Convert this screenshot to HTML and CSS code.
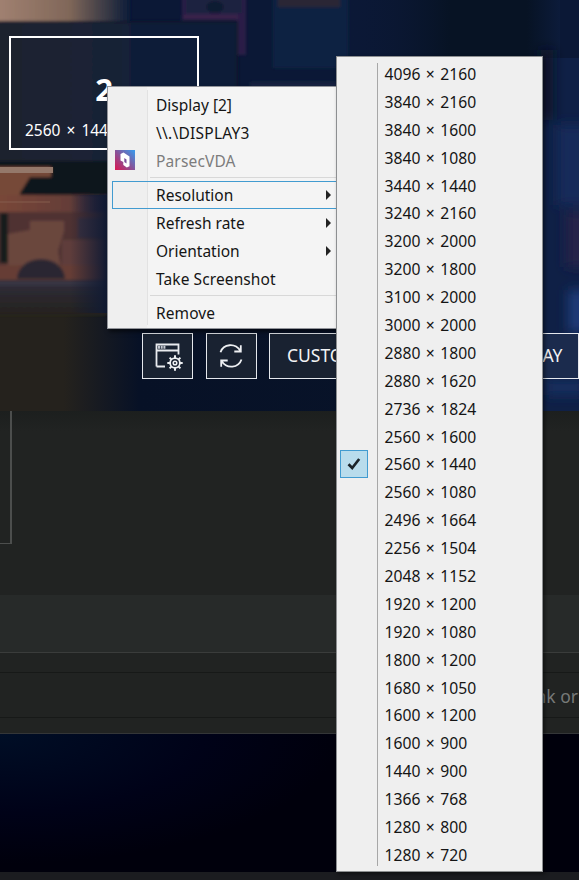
FILE: index.html
```
<!DOCTYPE html>
<html lang="en">
<head>
<meta charset="utf-8">
<title>Display manager</title>
<link rel="stylesheet" href="styles.css">
</head>
<body>
<main class="desktop">
  <section class="app">
    <svg class="wallpaper" viewBox="0 0 579 411" preserveAspectRatio="none" aria-hidden="true">
      <defs>
        <linearGradient id="base" x1="0" x2="1">
          <stop offset="0" stop-color="#25221d"/><stop offset=".11" stop-color="#25221d"/>
          <stop offset=".24" stop-color="#071126"/><stop offset=".65" stop-color="#081329"/><stop offset="1" stop-color="#102552"/>
        </linearGradient>
        <linearGradient id="sand" x1="0" x2="1"><stop offset="0" stop-color="#a28272"/><stop offset=".55" stop-color="#806759"/><stop offset="1" stop-color="#0c1c38"/></linearGradient>
        <linearGradient id="panel" x1="0" x2="1"><stop offset="0" stop-color="#1f222d"/><stop offset=".35" stop-color="#1c2434"/><stop offset=".65" stop-color="#0d1d38"/><stop offset="1" stop-color="#0b1b38"/></linearGradient>
        <linearGradient id="rust" x1="0" x2="1"><stop offset="0" stop-color="#7a4739"/><stop offset=".65" stop-color="#643d38"/><stop offset="1" stop-color="#1c2040"/></linearGradient>
        <linearGradient id="shade" x1="0" x2="1"><stop offset="0" stop-color="#0c1938" stop-opacity="0"/><stop offset=".5" stop-color="#071324"/><stop offset=".85" stop-color="#071324"/><stop offset="1" stop-color="#0c1b3a"/></linearGradient>
        <linearGradient id="haze" x1="0" y1="0" x2="0" y2="1"><stop offset="0" stop-color="#2f2d3a"/><stop offset="1" stop-color="#25221d"/></linearGradient>
        <linearGradient id="edge" x1="0" x2="1"><stop offset="0" stop-color="#101a33" stop-opacity="0"/><stop offset="1" stop-color="#101a33"/></linearGradient>
        <filter id="soft" x="-10%" y="-10%" width="120%" height="120%"><feGaussianBlur stdDeviation="1.5"/></filter>
        <filter id="softer" x="-30%" y="-30%" width="160%" height="160%"><feGaussianBlur stdDeviation="6"/></filter>
      </defs>
      <rect width="579" height="411" fill="url(#base)"/>
      <rect x="120" width="459" height="90" fill="#0b1836"/>
      <rect x="340" width="220" height="70" fill="url(#shade)"/>
      <g filter="url(#soft)">
        <rect x="-5" y="-5" width="135" height="26" fill="url(#sand)"/>
        <path d="M182-5h64v60h-10V20h-54z" fill="#2b1e46"/>
        <rect x="186" y="-5" width="56" height="18" fill="#1b2440"/>
        <ellipse cx="215" cy="7" rx="9" ry="6" fill="#101c30"/>
        <rect x="183" y="15" width="55" height="4" fill="#3a2048"/>
        <rect x="273" y="-5" width="75" height="73" fill="#0e2043"/>
        <rect x="278" y="-3" width="62" height="10" fill="#2a2536"/>
        <rect x="250" y="82" width="90" height="8" fill="#12203f"/>
        <rect x="-5" y="22" width="242" height="139" fill="url(#panel)"/>
        <path d="M-5 22h242v80" fill="none" stroke="#09122a" stroke-width="2"/>
        <rect x="-5" y="161" width="115" height="37" fill="#10171a"/>
        <path d="M-5 167h56v10H30l-10 16v3H-5z" fill="#764838"/>
        <rect x="-5" y="195" width="116" height="19" fill="url(#rust)"/>
        <rect x="-5" y="212" width="112" height="68" fill="#4f3332"/>
        <rect x="0" y="213" width="8" height="50" fill="#171c1e"/>
        <path d="M8 234l22-4v-9h34v10l-6 20 3 16H8z" fill="#6b463d"/>
        <path d="M62 240h44v31H62z" fill="#5e3d3b"/>
        <rect x="78" y="218" width="29" height="20" fill="#3c3341"/>
        <rect x="-5" y="265" width="112" height="15" fill="#663e36"/>
        <path d="M17 279a24 20 0 0 1 48 0z" fill="#2b2833"/>
        <rect x="-5" y="281" width="112" height="34" fill="url(#haze)"/>
        <path d="M-5 283H108" stroke="#383544" stroke-width="5"/>
      </g>
      <rect x="70" y="195" width="38" height="118" fill="url(#edge)"/>
      <rect y="167" width="53" height="6" fill="#94786a"/>
      <path d="M0 202h50" stroke="#855d4c"/>
      <rect x="543" y="58" width="36" height="353" fill="#0f2046"/>
      <g filter="url(#softer)">
        <rect x="541" y="50" width="12" height="70" fill="#081428"/>
        <rect x="557" y="125" width="30" height="80" fill="#152b5a"/>
        <rect x="566" y="212" width="20" height="55" fill="#262349"/>
        <rect x="568" y="290" width="20" height="42" fill="#1c3b78"/>
        <rect x="545" y="380" width="40" height="15" fill="#162e5e"/>
      </g>
    </svg>
    <div class="monitor"><strong>2</strong><span>2560 × 1440</span></div>
    <div class="toolbar">
      <button class="tool" aria-label="Settings"><svg width="32" height="32" viewBox="0 0 32 32"><path d="M4.5 26.5V4.5h22v10M4.5 10.5h22M4.5 26.5h8.5" fill="none" stroke="#e9ebef" stroke-width="1.8"/><path d="M6 7.3h8" stroke="#c3c8d0" stroke-width="3" stroke-dasharray="2 .7"/><circle cx="23" cy="23" r="4.9" fill="none" stroke="#eef0f3" stroke-width="1.8"/><circle cx="23" cy="23" r="1.8" fill="none" stroke="#eef0f3" stroke-width="1.5"/><path d="M23 15.3v3M23 27.7v3M15.3 23h3M27.7 23h3M17.6 17.6l2 2M26.4 26.4l2 2M17.6 28.4l2-2M26.4 19.6l2-2" stroke="#eef0f3" stroke-width="2"/></svg></button>
      <button class="tool" aria-label="Refresh"><svg width="32" height="32" viewBox="0 0 32 32" fill="none" stroke="#eef0f3" stroke-width="1.8"><path d="M5.5 12.2C8.5 3.8 20 2.5 25.5 11M25.8 5.2v6.3h-6.5M26.5 19.5C23.5 28 12 29.500 6.500 21M6.200 26.800v-6.300h6.500"/></svg></button>
      <button class="tool tool-custom">CUSTOM</button>
      <button class="tool tool-display">DISPLAY</button>
    </div>
  </section>
  <section class="page">
    <div class="frame"></div>
  </section>
  <section class="band"></section>
  <section class="composer"><div class="field">link or</div></section>
  <section class="night"></section>
  <footer class="taskbar"></footer>

  <nav class="menu">
    <div class="item">Display [2]</div>
    <div class="item path">\\.\DISPLAY3</div>
    <div class="item muted"><svg class="logo" width="20" height="20" viewBox="0 0 20 20"><defs><linearGradient id="vda" x1="0" y1="1" x2="1" y2="0"><stop offset="0" stop-color="#dc164f"/><stop offset=".5" stop-color="#85549b"/><stop offset="1" stop-color="#359df0"/></linearGradient></defs><rect width="20" height="20" fill="url(#vda)"/><path d="M5.500 4l3-1.400 6 4v9.600l-2.700 1.400-3.500-2.500v-3L5.500 10.500z" fill="#fff"/><path d="M9.300 8l2.200 1.400v4L9.300 12z" fill="#7c4f99"/></svg><span>ParsecVDA</span></div>
    <hr>
    <div class="item active">Resolution<i class="arrow"></i></div>
    <div class="item rate">Refresh rate<i class="arrow"></i></div>
    <div class="item">Orientation<i class="arrow"></i></div>
    <div class="item shot">Take Screenshot</div>
    <hr>
    <div class="item remove">Remove</div>
  </nav>

  <ul class="submenu">
    <li>4096 × 2160</li><li>3840 × 2160</li><li>3840 × 1600</li><li>3840 × 1080</li>
    <li>3440 × 1440</li><li>3240 × 2160</li><li>3200 × 2000</li><li>3200 × 1800</li>
    <li>3100 × 2000</li><li>3000 × 2000</li><li>2880 × 1800</li><li>2880 × 1620</li>
    <li>2736 × 1824</li><li>2560 × 1600</li>
    <li><span class="check"><svg width="14" height="14" viewBox="0 0 14 14"><path d="M1.500 7.200l3.700 3.800 7-9" fill="none" stroke="#1b2329" stroke-width="2.700"/></svg></span>2560 × 1440</li>
    <li>2560 × 1080</li><li>2496 × 1664</li><li>2256 × 1504</li><li>2048 × 1152</li>
    <li>1920 × 1200</li><li>1920 × 1080</li><li>1800 × 1200</li><li>1680 × 1050</li>
    <li>1600 × 1200</li><li>1600 × 900</li><li>1440 × 900</li><li>1366 × 768</li>
    <li>1280 × 800</li><li>1280 × 720</li>
  </ul>
</main>
</body>
</html>
```
FILE: styles.css
```
* { box-sizing: border-box; }
body { margin: 0; font-family: "Noto Sans", "Open Sans", sans-serif; font-size: 16px; color: #151515; overflow: hidden; }
.desktop { position: relative; width: 579px; height: 880px; overflow: hidden; display: flex; flex-direction: column; }
.app { height: 411px; position: relative; overflow: hidden; padding: 36px 0 0 9px; flex: none; }
.wallpaper { position: absolute; inset: 0; width: 100%; height: 100%; }
.monitor { position: relative; width: 190px; height: 114px; border: 2px solid #fff; color: #fff; display: flex; flex-direction: column; align-items: center; padding-top: 32px; }
.monitor strong { font-size: 31px; line-height: 38px; }
.monitor span { align-self: flex-start; margin: 11px 0 0 14px; font-size: 15.5px; line-height: 22px; word-spacing: 2px; white-space: nowrap; }
.toolbar { position: relative; display: flex; gap: 12.5px; margin: 183px 0 0 133px; width: 437px; }
.tool { flex: none; width: 51px; height: 46px; padding: 0; border: 1px solid #e5e8ed; background: #192231; color: #f2f3f5; display: flex; align-items: center; justify-content: center; font: 17.5px "Noto Sans", sans-serif; line-height: 42px; }
.tool-custom { width: 152px; padding: 0 0 2px 17px; justify-content: flex-start; }
.tool-display { width: 145px; padding: 0 15px 2px 0; justify-content: flex-end; background: #1b2b4d; }
.page { height: 184px; background: linear-gradient(#1c1f1e, #212322 20px); flex: none; }
.frame { width: 12px; height: 133px; border: solid #4c4e4d; border-width: 0 2px 1px 0; }
.band { height: 58px; background: #272a29; border-bottom: 1px solid #3a3c3b; flex: none; }
.composer { height: 81px; background: #212322; border-bottom: 1px solid #343638; padding-top: 19px; flex: none; }
.field { height: 46px; border: solid #171918; border-width: 1px 0; padding-left: 526.5px; line-height: 46px; font-size: 17.5px; color: #777978; white-space: nowrap; }
.night { flex: 1; background: radial-gradient(ellipse 340px 130px at 0 0, #000e26, #000218 60%, #00000c); }
.taskbar { height: 8px; background: #1b1c20; flex: none; }
.menu { position: absolute; left: 107px; top: 86px; width: 240px; height: 243px; padding: 4px 0; border: 1px solid #92949a; background: linear-gradient(#e2e2e2, #e2e2e2) 39px 3px / 1px 235px no-repeat, linear-gradient(90deg, #efefef 39px, #f4f4f4 39px); box-shadow: 2px 3px 4px #0008; }
.item { position: relative; height: 28px; padding-left: 48px; display: flex; align-items: center; white-space: nowrap; font-size: 15.5px; }
.item.path { letter-spacing: .25px; }
.item.muted { color: #7c7c7c; letter-spacing: .15px; }
.item.shot, .item.remove { letter-spacing: .1px; }
.item.active { margin-left: 4px; border: solid #429bd0; border-width: 1px 0 1px 1px; padding-left: 43px; }
.logo { position: absolute; left: 7px; top: 3px; }
.menu hr { height: 1px; border: 0; background: #d8d8d8; margin: 2px 0 3px 42px; }
.arrow { position: absolute; left: 218px; top: 9px; border: solid transparent; border-width: 5px 0 5px 5px; border-left-color: #222; }
.active .arrow { left: 213px; top: 8px; }
.submenu { position: absolute; left: 336px; top: 56px; width: 207px; height: 816px; margin: 0; padding: 3px 0; list-style: none; border: 1px solid #8d8f91; background: linear-gradient(#a7a7a7, #a7a7a7) 40px 6px / 1px 803px no-repeat, #efefef; box-shadow: 2px 2px 4px #0007; }
.submenu li { position: relative; height: 27.9px; line-height: 28px; padding-left: 47.5px; white-space: nowrap; font-size: 15.7px; word-spacing: 1.4px; }
.check { position: absolute; left: 3px; top: 0; width: 28px; height: 28px; border: 1px solid #429bd0; background: #b9dcec; display: flex; align-items: center; justify-content: center; }
```
